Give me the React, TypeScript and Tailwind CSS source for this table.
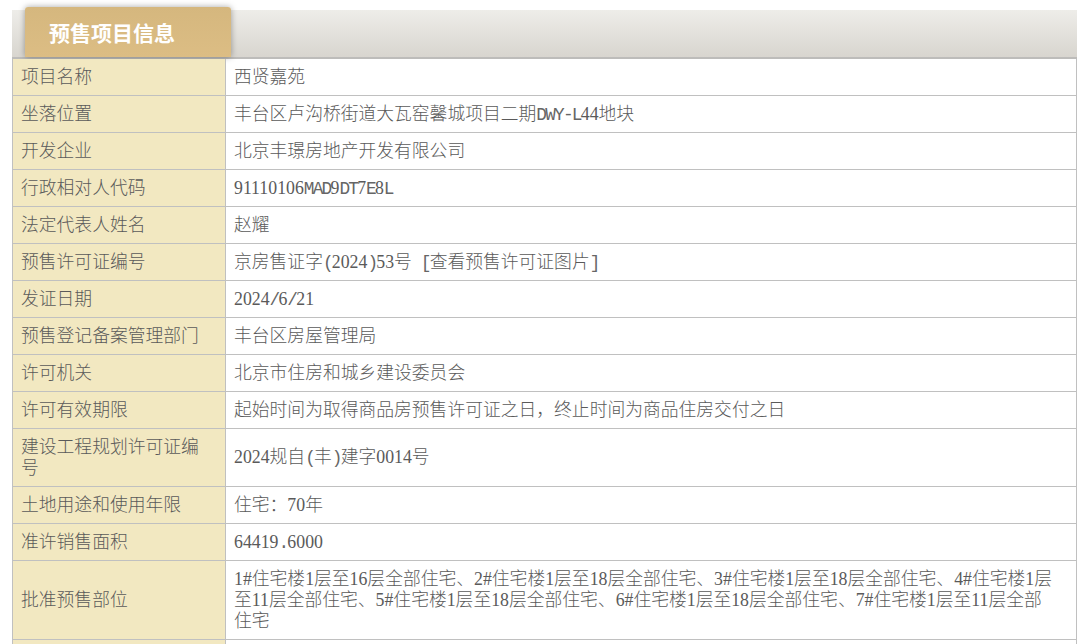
import React from "react";

// Render text so that ASCII letters/punctuation take a half-width (0.5em) cell,
// like the reference's SimSun-style mixed text.
function M({ t }: { t: string }) {
  const groups: { k: string; s: string }[] = [];
  Array.from(t).forEach((ch) => {
    const k = /[0-9#]/.test(ch) ? "d" : /[\x20-\x7e]/.test(ch) ? "a" : "c";
    const last = groups[groups.length - 1];
    if (last && (last.k === k || (last.k !== "a" && k !== "a"))) last.s += ch;
    else groups.push({ k, s: ch });
  });
  return (
    <>
      {groups.map((g, i) =>
        g.k === "a" ? (
          <span
            key={i}
            className="tracking-[-1.78px] leading-none text-[#666]"
            style={{ fontFamily: '"Liberation Mono", monospace' }}
          >
            {g.s.replace(/ /g, "\u00a0")}
          </span>
        ) : (
          <React.Fragment key={i}>{g.s}</React.Fragment>
        )
      )}
    </>
  );
}

const rows: { label: React.ReactNode; value: React.ReactNode }[] = [
  { label: "项目名称", value: "西贤嘉苑" },
  { label: "坐落位置", value: <M t="丰台区卢沟桥街道大瓦窑馨城项目二期DWY-L44地块" /> },
  { label: "开发企业", value: "北京丰璟房地产开发有限公司" },
  { label: "行政相对人代码", value: <M t="91110106MAD9DT7E8L" /> },
  { label: "法定代表人姓名", value: "赵耀" },
  { label: "预售许可证编号", value: <M t="京房售证字(2024)53号 [查看预售许可证图片]" /> },
  { label: "发证日期", value: <M t="2024/6/21" /> },
  { label: "预售登记备案管理部门", value: "丰台区房屋管理局" },
  { label: "许可机关", value: "北京市住房和城乡建设委员会" },
  { label: "许可有效期限", value: "起始时间为取得商品房预售许可证之日，终止时间为商品住房交付之日" },
  {
    label: (
      <>
        建设工程规划许可证编
        <br />号
      </>
    ),
    value: <M t="2024规自(丰)建字0014号" />,
  },
  { label: "土地用途和使用年限", value: "住宅：70年" },
  { label: "准许销售面积", value: <M t="64419.6000" /> },
  {
    label: "批准预售部位",
    value: (
      <>
        1#住宅楼1层至16层全部住宅、2#住宅楼1层至18层全部住宅、3#住宅楼1层至18层全部住宅、4#住宅楼1层
        <br />
        至11层全部住宅、5#住宅楼1层至18层全部住宅、6#住宅楼1层至18层全部住宅、7#住宅楼1层至11层全部
        <br />
        住宅
      </>
    ),
  },
  { label: "\u00a0", value: "\u00a0" },
];

export default function App() {
  return (
    <div className="w-[1085px] h-[644px] overflow-hidden bg-white pt-[10px] pl-[12px]">
      <div className="w-[1065px]">
        {/* header bar */}
        <div className="h-[49px] bg-gradient-to-b from-[#eeede9] to-[#d8d5cf] border-b-2 border-[#bdbcba] flex items-start">
          <div
            className="ml-[13px] -mt-[3px] w-[206px] h-[50px] rounded-t-[3px] bg-gradient-to-b from-[#d5b77e] to-[#dcbd84] shadow-[0_0_6px_rgba(0,0,0,0.35)] flex items-center pl-[24px] text-white font-bold text-[21px] leading-none"
            style={{ fontFamily: '"Noto Sans CJK SC", "Noto Sans", sans-serif' }}
          >
            预售项目信息
          </div>
        </div>
        {/* table */}
        <div
          className="border-l border-r border-[#c0c0c0] text-[17.8px] leading-[21px] text-[#5a5a5a] font-light"
          style={{ fontFamily: '"Liberation Serif", "Noto Sans CJK SC", serif' }}
        >
          {rows.map((r, i) => (
            <div key={i} className="flex border-b border-[#c0c0c0]">
              <div className="w-[213px] shrink-0 bg-[#f2e8c1] border-r border-[#c0c0c0] px-2 py-[7.5px] flex items-center">
                <div>{r.label}</div>
              </div>
              <div className="flex-1 px-2 py-[7.5px] flex items-center whitespace-nowrap">
                <div>{r.value}</div>
              </div>
            </div>
          ))}
        </div>
      </div>
    </div>
  );
}
